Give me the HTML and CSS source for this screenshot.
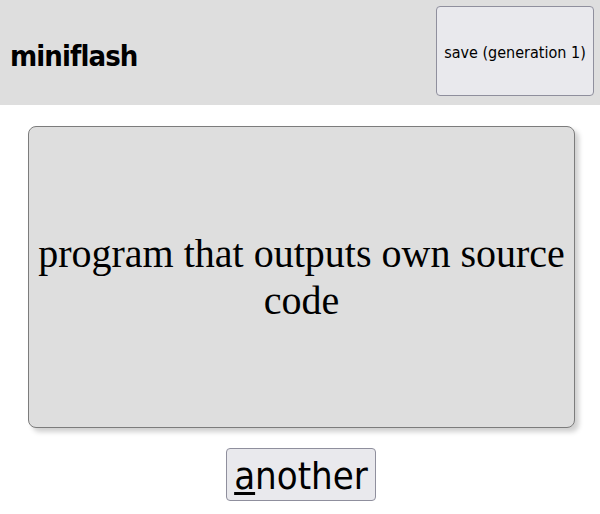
FILE: index.html
```html
<!DOCTYPE html>
<html>
<head>
<meta charset="utf-8">
<title>miniflash</title>
<link rel="stylesheet" href="styles.css">
</head>
<body>
<header class="topbar">
  <h1 class="brand">miniflash</h1>
  <button class="save-btn">save (generation 1)</button>
</header>
<main class="main">
  <div class="card">
    <p class="card-text">program that outputs own source code</p>
  </div>
  <div class="actions">
    <button class="another-btn"><u>a</u>nother</button>
  </div>
</main>
</body>
</html>
```
FILE: styles.css
```css
html, body {
  margin: 0;
  padding: 0;
  background: #ffffff;
}
body {
  font-family: "DejaVu Sans", sans-serif;
  font-stretch: condensed;
  color: #000;
}
.topbar {
  box-sizing: border-box;
  height: 105px;
  background: #dedede;
  display: flex;
  justify-content: space-between;
  align-items: flex-start;
  padding: 6px 6px 0 10px;
}
.brand {
  margin: 0;
  align-self: center;
  font-size: 29px;
  letter-spacing: -0.9px;
  font-weight: bold;
  font-stretch: condensed;
  line-height: 1;
  padding-top: 2px;
}
.save-btn {
  box-sizing: border-box;
  width: 158px;
  height: 90px;
  background: #e9e9ed;
  border: 1px solid #8f8f9d;
  border-radius: 4px;
  font-family: "DejaVu Sans", sans-serif;
  font-stretch: condensed;
  font-size: 16px;
  color: #000;
  padding: 3px 0 0 0;
}
.main {
  display: flex;
  flex-direction: column;
}
.card {
  box-sizing: border-box;
  margin: 21px 25px 0 28px;
  height: 302px;
  background: #dedede;
  border: 1px solid #7c7c7c;
  border-radius: 8px;
  box-shadow: 4px 4px 5px #d0d0d0;
  display: flex;
  align-items: center;
  justify-content: center;
  padding: 0 8px;
}
.card-text {
  margin: 0;
  font-family: "Liberation Serif", serif;
  font-size: 40px;
  text-align: center;
}
.actions {
  display: flex;
  justify-content: center;
  padding-top: 20px;
}
.another-btn {
  box-sizing: border-box;
  width: 150px;
  height: 53px;
  background: #e9e9ed;
  border: 1px solid #8f8f9d;
  border-radius: 4px;
  font-family: "DejaVu Sans", sans-serif;
  font-stretch: condensed;
  font-size: 38px;
  color: #000;
  padding: 3px 0 0 0;
  margin-left: 2px;
}
.another-btn u {
  text-decoration-thickness: 3px;
  text-underline-offset: 3px;
}
```
